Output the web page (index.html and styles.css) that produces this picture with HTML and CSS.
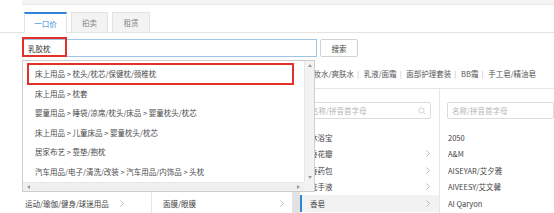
FILE: index.html
```html
<!DOCTYPE html>
<html>
<head>
    <meta charset="utf-8">
    <title>选择类目</title>
    <link rel="stylesheet" href="styles.css">
</head>

<body>
    <div class="top-strip"></div>

    <div class="tabs">
        <div class="tab active">一口价</div>
        <div class="tab tab-auction">拍卖</div>
        <div class="tab tab-rent">租赁</div>
    </div>

    <div class="search-row">
        <input type="text" class="search-input" value="乳胶枕">
        <input type="button" class="search-button" value="搜索">
        <span class="mark-box"></span>

        <!-- suggestion dropdown over the category panel -->
        <div class="suggest">
            <div class="suggest-list">
                <div class="suggest-item marked">床上用品 &gt; 枕头/枕芯/保健枕/颈椎枕</div>
                <div class="suggest-item">床上用品 &gt; 枕套</div>
                <div class="suggest-item">婴童用品 &gt; 睡袋/凉席/枕头/床品 &gt; 婴童枕头/枕芯</div>
                <div class="suggest-item">床上用品 &gt; 儿童床品 &gt; 婴童枕头/枕芯</div>
                <div class="suggest-item">居家布艺 &gt; 靠垫/抱枕</div>
                <div class="suggest-item">汽车用品/电子/清洗/改装 &gt; 汽车用品/内饰品 &gt; 头枕</div>
            </div>
            <div class="vscroll">
                <span class="arrow arrow-up"></span>
                <span class="arrow arrow-down"></span>
            </div>
            <div class="hscroll">
                <span class="arrow arrow-left"></span>
                <span class="arrow arrow-right"></span>
            </div>
            <div class="corner"></div>
        </div>
    </div>

    <div class="category">
        <div class="crumbs">
            <span>化妆水/爽肤水</span><span class="sep">|</span>
            <span>乳液/面霜</span><span class="sep">|</span>
            <span>面部护理套装</span><span class="sep">|</span>
            <span>BB霜</span><span class="sep">|</span>
            <span>手工皂/精油皂</span>
        </div>

        <div class="columns">
            <div class="col col-a">
                <input type="text" class="col-search">
                <div class="col-list">
                    <div class="col-row"></div>
                    <div class="col-row"></div>
                    <div class="col-row"></div>
                    <div class="col-row"></div>
                    <div class="col-row">运动/瑜伽/健身/球迷用品 <svg class="chev" viewBox="0 0 4 7"><polyline points="0.5,0.5 3.5,3.5 0.5,6.5"/></svg></div>
                </div>
            </div>

            <div class="col col-b">
                <div class="col-body">
                    <input type="text" class="col-search">
                    <div class="col-list">
                        <div class="col-row"></div>
                        <div class="col-row"></div>
                        <div class="col-row"></div>
                        <div class="col-row"></div>
                        <div class="col-row">面膜/眼膜 <svg class="chev" viewBox="0 0 4 7"><polyline points="0.5,0.5 3.5,3.5 0.5,6.5"/></svg></div>
                    </div>
                </div>
                <div class="scroll-strip"></div>
            </div>

            <div class="col col-c">
                <div class="search-box">
                    <input type="text" class="col-search" placeholder="名称/拼音首字母">
                    <svg class="search-icon" viewBox="0 0 8 8"><circle cx="3.5" cy="3.5" r="2.6"/><line x1="5.4" y1="5.4" x2="7.2" y2="7.2"/></svg>
                </div>
                <div class="col-list">
                    <div class="col-row">沐浴宝</div>
                    <div class="col-row">香花瓣 <svg class="chev" viewBox="0 0 4 7"><polyline points="0.5,0.5 3.5,3.5 0.5,6.5"/></svg></div>
                    <div class="col-row">香药包 <svg class="chev" viewBox="0 0 4 7"><polyline points="0.5,0.5 3.5,3.5 0.5,6.5"/></svg></div>
                    <div class="col-row">洗手液 <svg class="chev" viewBox="0 0 4 7"><polyline points="0.5,0.5 3.5,3.5 0.5,6.5"/></svg></div>
                    <div class="col-row selected">香皂 <svg class="chev" viewBox="0 0 4 7"><polyline points="0.5,0.5 3.5,3.5 0.5,6.5"/></svg></div>
                </div>
            </div>

            <div class="col col-d">
                <input type="text" class="col-search" placeholder="名称/拼音首字母">
                <div class="col-list">
                    <div class="col-row">2050</div>
                    <div class="col-row">A&amp;M</div>
                    <div class="col-row">AISEYAR/艾夕雅</div>
                    <div class="col-row">AIVEESY/艾文馨</div>
                    <div class="col-row">AI Qaryon</div>
                </div>
            </div>
        </div>
    </div>
</body>
</html>
```

FILE: styles.css
```css
* {
    box-sizing: border-box;
}

html, body {
    overflow: hidden;
}

body {
    margin: 0;
    width: 554px;
    height: 213px;
    font-family: "Noto Sans CJK SC", "Liberation Sans", sans-serif;
    font-size: 7.5px;
    color: #444;
    background: #fff;
}

.top-strip {
    margin-left: 22px;
    height: 5px;
    background: #f4f4f4;
    border-bottom: 1px solid #ebebeb;
}

/* tabs */
.tabs {
    display: flex;
    gap: 4px;
    margin-top: 7px;
    padding-left: 24px;
    border-bottom: 1px solid #e3e3e3;
}

.tab {
    width: 37px;
    height: 20px;
    line-height: 19px;
    text-align: center;
    color: #888;
    background: #f3f3f3;
    border: 1px solid #e3e3e3;
    border-bottom: none;
}

.tab.active {
    width: 43px;
    height: 21px;
    margin-bottom: -1px;
    color: #2f86d6;
    background: #fff;
    border-top: 2px solid #2f86d6;
}

.tab-rent {
    width: 38px;
}

/* search */
.search-row {
    position: relative;
    display: flex;
    margin-top: 6px;
    margin-left: 22px;
    height: 18px;
}

.search-input {
    width: 295px;
    height: 18px;
    padding: 0 5px;
    font: inherit;
    color: #333;
    border: 1px solid #9fc5e2;
    outline: none;
}

.search-button {
    width: 38px;
    height: 18px;
    margin-left: 3px;
    font: inherit;
    color: #444;
    background: #fff;
    border: 1px solid #d2d2d2;
    border-radius: 2px;
}

.mark-box {
    position: absolute;
    left: 0;
    top: -2px;
    width: 45px;
    height: 20px;
    border: 2px solid #e0312b;
}

/* dropdown */
.suggest {
    position: absolute;
    left: 0;
    top: 21px;
    z-index: 5;
    width: 293px;
    height: 132px;
    display: grid;
    grid-template-columns: 1fr 10px;
    grid-template-rows: 1fr 9px;
    background: #fff;
    border: 1px solid #cfcfcf;
}

.suggest-list {
    padding-top: 3px;
    overflow: hidden;
    white-space: nowrap;
}

.suggest-item {
    position: relative;
    height: 19.5px;
    line-height: 19.5px;
    padding-left: 12px;
    color: #4a4a4a;
}

.suggest-item.marked::after {
    content: "";
    position: absolute;
    left: 4px;
    right: 10px;
    top: -1px;
    bottom: -1.5px;
    border: 2px solid #e0312b;
}

.vscroll {
    display: flex;
    flex-direction: column;
    justify-content: space-between;
    align-items: center;
    padding: 3px 0;
    background: #f3f3f3;
    border-left: 1px solid #e6e6e6;
}

.hscroll {
    display: flex;
    justify-content: space-between;
    align-items: center;
    padding: 0 4px;
    background: #f0f0f0;
    border-top: 1px solid #e6e6e6;
}

.corner {
    background: #f3f3f3;
}

.arrow {
    width: 0;
    height: 0;
    border: 2px solid transparent;
}

.arrow-up { border-bottom: 3px solid #999; border-top: none; }
.arrow-down { border-top: 3px solid #999; border-bottom: none; }
.arrow-left { border-right: 3px solid #999; border-left: none; }
.arrow-right { border-left: 3px solid #999; border-right: none; }

/* category panel */
.category {
    margin-left: 22px;
    margin-top: 9px;
}

.crumbs {
    height: 15px;
    line-height: 15px;
    padding-left: 284px;
    white-space: nowrap;
    color: #555;
}

.crumbs .sep {
    margin: 0 3px;
    color: #bbb;
}

.columns {
    display: flex;
    height: 130px;
    margin-top: 7px;
    border-top: 1px solid #e6e6e6;
}

.col {
    padding-top: 13px;
}

.col-a {
    width: 130px;
    border-right: 1px solid #e6e6e6;
}

.col-b {
    width: 148px;
    display: flex;
    padding-top: 0;
}

.col-b .col-body {
    flex: 1;
    padding-top: 13px;
}

.scroll-strip {
    width: 8px;
    background: #e2e2e2;
}

.col-c {
    width: 140px;
    border-right: 1px solid #e6e6e6;
}

.col-d {
    flex: 1;
}

.col-search {
    display: block;
    width: 100%;
    height: 17px;
    padding: 0 4px;
    font: inherit;
    border: 1px solid #dcdcdc;
    border-radius: 2px;
    outline: none;
}

.col-search::placeholder {
    color: #b5b5b5;
}

.col-a .col-search,
.col-b .col-search {
    margin: 0 6px;
    width: calc(100% - 14px);
}

.search-box {
    position: relative;
    margin: 0 8px 0 6px;
}

.search-icon {
    position: absolute;
    right: 5px;
    top: 4.5px;
    width: 8px;
    height: 8px;
    fill: none;
    stroke: #c4c4c4;
    stroke-width: 0.8;
}

.col-d .col-search {
    margin-left: 7px;
    width: calc(100% - 7px);
}

.col-list {
    margin-top: 10px;
}

.col-row {
    display: flex;
    justify-content: space-between;
    align-items: center;
    height: 16.5px;
    white-space: nowrap;
    color: #444;
}

.chev {
    width: 4px;
    height: 7px;
    fill: none;
    stroke: #aaa;
    stroke-width: 0.8;
}

.col-a .col-row { padding: 0 27px 0 3px; }
.col-b .col-row { padding: 0 8px 0 11px; }
.col-c .col-row { padding: 0 9px 0 10px; }
.col-d .col-row { padding-left: 8px; }

.col-c .col-row.selected {
    padding-left: 8px;
    background: #f2f2f2;
    border-left: 2px solid #2f86d6;
}
```
